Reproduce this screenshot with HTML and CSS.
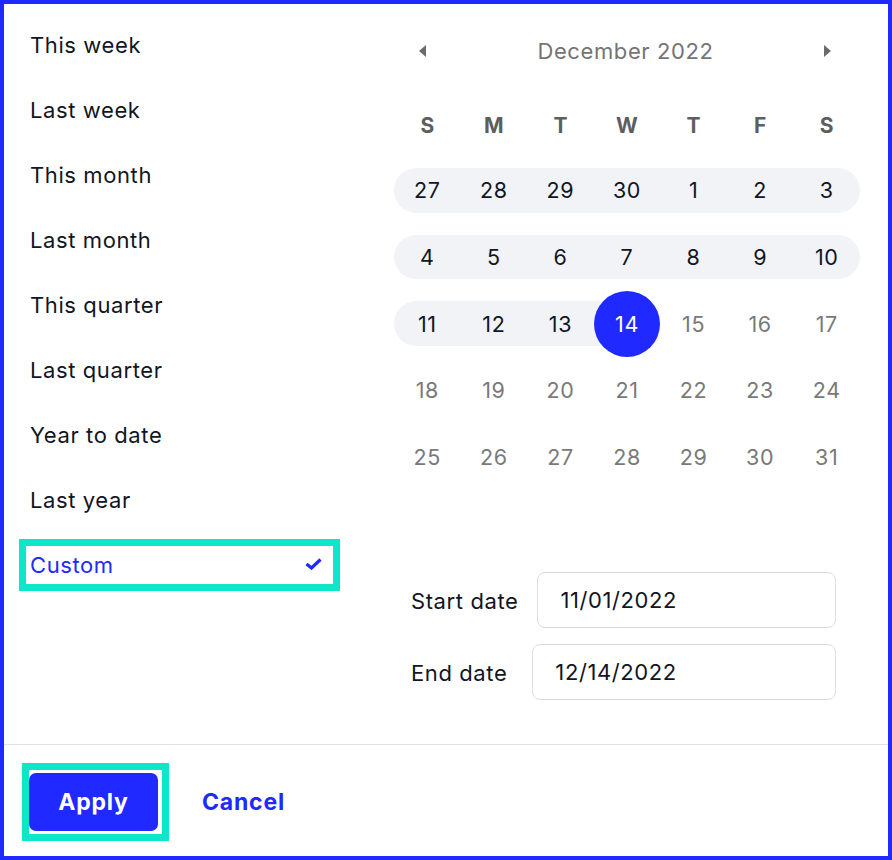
FILE: index.html
```html
<!DOCTYPE html>
<html lang="en">
<head>
<meta charset="utf-8">
<title>Date range picker</title>
<link rel="stylesheet" href="styles.css">
</head>
<body>
<div class="frame">
  <div class="top">
    <ul class="presets">
      <li class="preset">This week</li>
      <li class="preset">Last week</li>
      <li class="preset">This month</li>
      <li class="preset">Last month</li>
      <li class="preset">This quarter</li>
      <li class="preset">Last quarter</li>
      <li class="preset">Year to date</li>
      <li class="preset">Last year</li>
      <li class="preset preset-active">Custom
        <svg class="check" width="17" height="12" viewBox="0 0 17 12"><path d="M1.5 6 L6.5 10 L15.5 1.5" fill="none" stroke="#2029ff" stroke-width="3.2" stroke-linecap="butt" stroke-linejoin="miter"/></svg>
      </li>
    </ul>
    <div class="calendar">
      <div class="cal-head">
        <span class="nav"><svg width="8" height="12" viewBox="0 0 8 12"><path d="M7 0 L0 6 L7 12 Z" fill="#6b6b6b"/></svg></span>
        <span class="month">December 2022</span>
        <span class="nav"><svg width="8" height="12" viewBox="0 0 8 12"><path d="M0 0 L7 6 L0 12 Z" fill="#6b6b6b"/></svg></span>
      </div>
      <div class="weekdays">
        <span>S</span><span>M</span><span>T</span><span>W</span><span>T</span><span>F</span><span>S</span>
      </div>
      <div class="days">
        <span class="day in first">27</span><span class="day in">28</span><span class="day in">29</span><span class="day in">30</span><span class="day in">1</span><span class="day in">2</span><span class="day in last">3</span>
        <span class="day in first">4</span><span class="day in">5</span><span class="day in">6</span><span class="day in">7</span><span class="day in">8</span><span class="day in">9</span><span class="day in last">10</span>
        <span class="day in first">11</span><span class="day in">12</span><span class="day in">13</span><span class="day in end"><span class="sel">14</span></span><span class="day out">15</span><span class="day out">16</span><span class="day out">17</span>
        <span class="day out">18</span><span class="day out">19</span><span class="day out">20</span><span class="day out">21</span><span class="day out">22</span><span class="day out">23</span><span class="day out">24</span>
        <span class="day out">25</span><span class="day out">26</span><span class="day out">27</span><span class="day out">28</span><span class="day out">29</span><span class="day out">30</span><span class="day out">31</span>
      </div>
      <div class="fields">
        <label class="field">
          <span class="field-label">Start date</span>
          <span class="input">11/01/2022</span>
        </label>
        <label class="field field-end">
          <span class="field-label">End date</span>
          <span class="input">12/14/2022</span>
        </label>
      </div>
    </div>
  </div>
  <div class="footer">
    <div class="apply-wrap"><button class="apply">Apply</button></div>
    <button class="cancel">Cancel</button>
  </div>
</div>
</body>
</html>
```
FILE: styles.css
```css
* { box-sizing: border-box; }
html, body { margin: 0; padding: 0; background: #fff; }
body { font-family: Inter, "Noto Sans", sans-serif; color: #101623; letter-spacing: 0.6px; }

.frame {
  width: 892px;
  height: 860px;
  border: 4px solid #2029ff;
  display: flex;
  flex-direction: column;
}

.top {
  height: 741px;
  flex: none;
  display: flex;
  border-bottom: 1px solid #e2e2e2;
}

.presets {
  list-style: none;
  margin: 0;
  padding: 22px 0 0 22px;
  width: 329px;
  flex: none;
}
.preset {
  height: 38px;
  margin-bottom: 27px;
  padding-left: 4px;
  padding-right: 11px;
  font-size: 22px;
  line-height: 38px;
  display: flex;
  align-items: center;
  justify-content: space-between;
}
.preset-active {
  color: #2029ff;
  outline: 7px solid #0de6c8;
}
.check { display: block; margin-top: -3px; }

.calendar {
  margin-left: 61px;
  width: 466px;
  padding-top: 25px;
}
.cal-head {
  height: 44px;
  display: flex;
  align-items: center;
  justify-content: space-between;
  padding: 0 28px 0 25px;
}
.nav { display: flex; align-items: center; }
.month { font-size: 22px; color: #747474; }

.weekdays {
  margin-top: 30px;
  height: 44px;
  display: grid;
  grid-template-columns: repeat(7, 1fr);
  align-items: center;
  text-align: center;
  font-size: 21px;
  font-weight: 700;
  color: #5e5e5e;
  letter-spacing: 0;
}

.days {
  margin-top: 10px;
  display: grid;
  grid-template-columns: repeat(7, 1fr);
  grid-auto-rows: 66.7px;
}
.day {
  position: relative;
  isolation: isolate;
  display: flex;
  align-items: center;
  justify-content: center;
  font-size: 21.5px;
  letter-spacing: 0.6px;
}
.day.in { color: #101623; }
.day.in::before {
  content: "";
  position: absolute;
  left: 0;
  right: 0;
  top: 11px;
  bottom: 11px;
  background: #f2f3f7;
  z-index: -1;
}
.day.first::before { border-radius: 23px 0 0 23px; }
.day.last::before { border-radius: 0 23px 23px 0; }
.day.end::before { right: 50%; }
.day.out { color: #797979; }

.sel {
  width: 66px;
  height: 66px;
  border-radius: 50%;
  background: #2029ff;
  color: #fff;
  display: flex;
  align-items: center;
  justify-content: center;
  position: relative;
  z-index: 1;
}

.fields {
  margin-top: 82px;
  padding: 0 24px 0 17px;
}
.field {
  display: flex;
  align-items: center;
  gap: 19px;
  height: 56px;
}
.field-end { margin-top: 16px; gap: 25px; }
.field-label { font-size: 22px; color: #101623; white-space: nowrap; padding-top: 1px; }
.input {
  flex: 1;
  height: 56px;
  border: 1px solid #dcdcdc;
  border-radius: 8px;
  padding-left: 22px;
  display: flex;
  align-items: center;
  font-size: 22px;
  color: #101623;
}

.footer {
  flex: 1;
  display: flex;
  align-items: flex-start;
  padding: 25px 0 0 25px;
}
.apply-wrap {
  outline: 7px solid #0de6c8;
  padding: 3px 4px 3px 0;
  display: flex;
}
.apply {
  width: 129px;
  height: 58px;
  border: 0;
  border-radius: 7px;
  background: #2029ff;
  color: #fff;
  font-family: Inter, "Noto Sans", sans-serif;
  font-size: 23px;
  font-weight: 700;
  letter-spacing: 0.8px;
  padding: 0;
}
.cancel {
  margin-left: 40px;
  height: 64px;
  border: 0;
  background: none;
  padding: 0;
  color: #2029ff;
  font-family: Inter, "Noto Sans", sans-serif;
  font-size: 23px;
  font-weight: 700;
  letter-spacing: 0.8px;
}
```
